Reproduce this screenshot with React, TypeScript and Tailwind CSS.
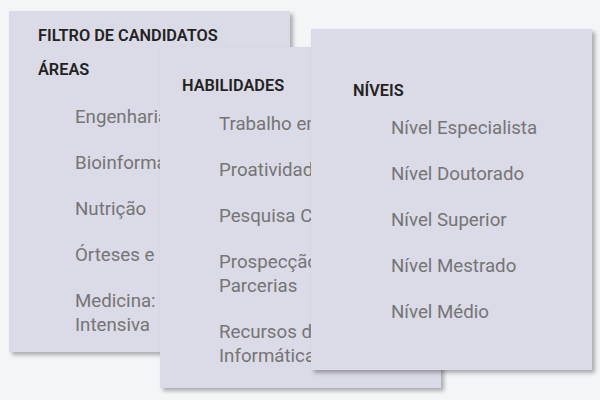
import React from 'react';

interface FilterCardProps {
    title?: string;
    heading: string;
    items: string[];
    className: string;
    headingClass: string;
    listClass: string;
}

const FilterCard: React.FC<FilterCardProps> = ({ title, heading, items, className, headingClass, listClass }) => (
    <div className={`relative shrink-0 w-[281px] h-[341px] bg-[#dbdae7] shadow-[3px_3px_4px_rgba(0,0,0,0.3)] ${className}`}>
        {title && (
            <h2 className="text-[16.3px] leading-[20px] font-semibold text-[#222222] uppercase">{title}</h2>
        )}
        <h3 className={`text-[16.3px] leading-[20px] font-semibold text-[#222222] uppercase ${headingClass}`}>{heading}</h3>
        <ul className={`flex flex-col gap-[22px] ${listClass}`}>
            {items.map((item) => (
                <li key={item} className="text-[18.7px] leading-[24px] text-[#757575]">
                    {item}
                </li>
            ))}
        </ul>
    </div>
);

const App: React.FC = () => {
    const areas = ['Engenharia Biomédica', 'Bioinformática', 'Nutrição', 'Órteses e Próteses', 'Medicina: Terapia Intensiva'];
    const habilidades = ['Trabalho em Equipe', 'Proatividade', 'Pesquisa Científica', 'Prospecção de Parcerias', 'Recursos de Informática'];
    const niveis = ['Nível Especialista', 'Nível Doutorado', 'Nível Superior', 'Nível Mestrado', 'Nível Médio'];

    return (
        <div className="w-[600px] h-[400px] overflow-hidden bg-[#f4f5f7] flex items-start font-['Roboto',sans-serif]">
            <FilterCard
                title="Filtro de candidatos"
                heading="Áreas"
                items={areas}
                className="ml-[9px] mt-[11px] pt-[15px] pl-[29px]"
                headingClass="mt-[14px]"
                listClass="mt-[25px] pl-[37px] w-[250px]"
            />
            <FilterCard
                heading="Habilidades"
                items={habilidades}
                className="-ml-[130px] mt-[47px] pt-[29px] pl-[22px]"
                headingClass=""
                listClass="mt-[16px] pl-[37px] w-[220px]"
            />
            <FilterCard
                heading="Níveis"
                items={niveis}
                className="-ml-[130px] mt-[29px] pt-[52px] pl-[42px]"
                headingClass=""
                listClass="mt-[15px] pl-[38px] w-[220px]"
            />
        </div>
    );
};

export default App;
